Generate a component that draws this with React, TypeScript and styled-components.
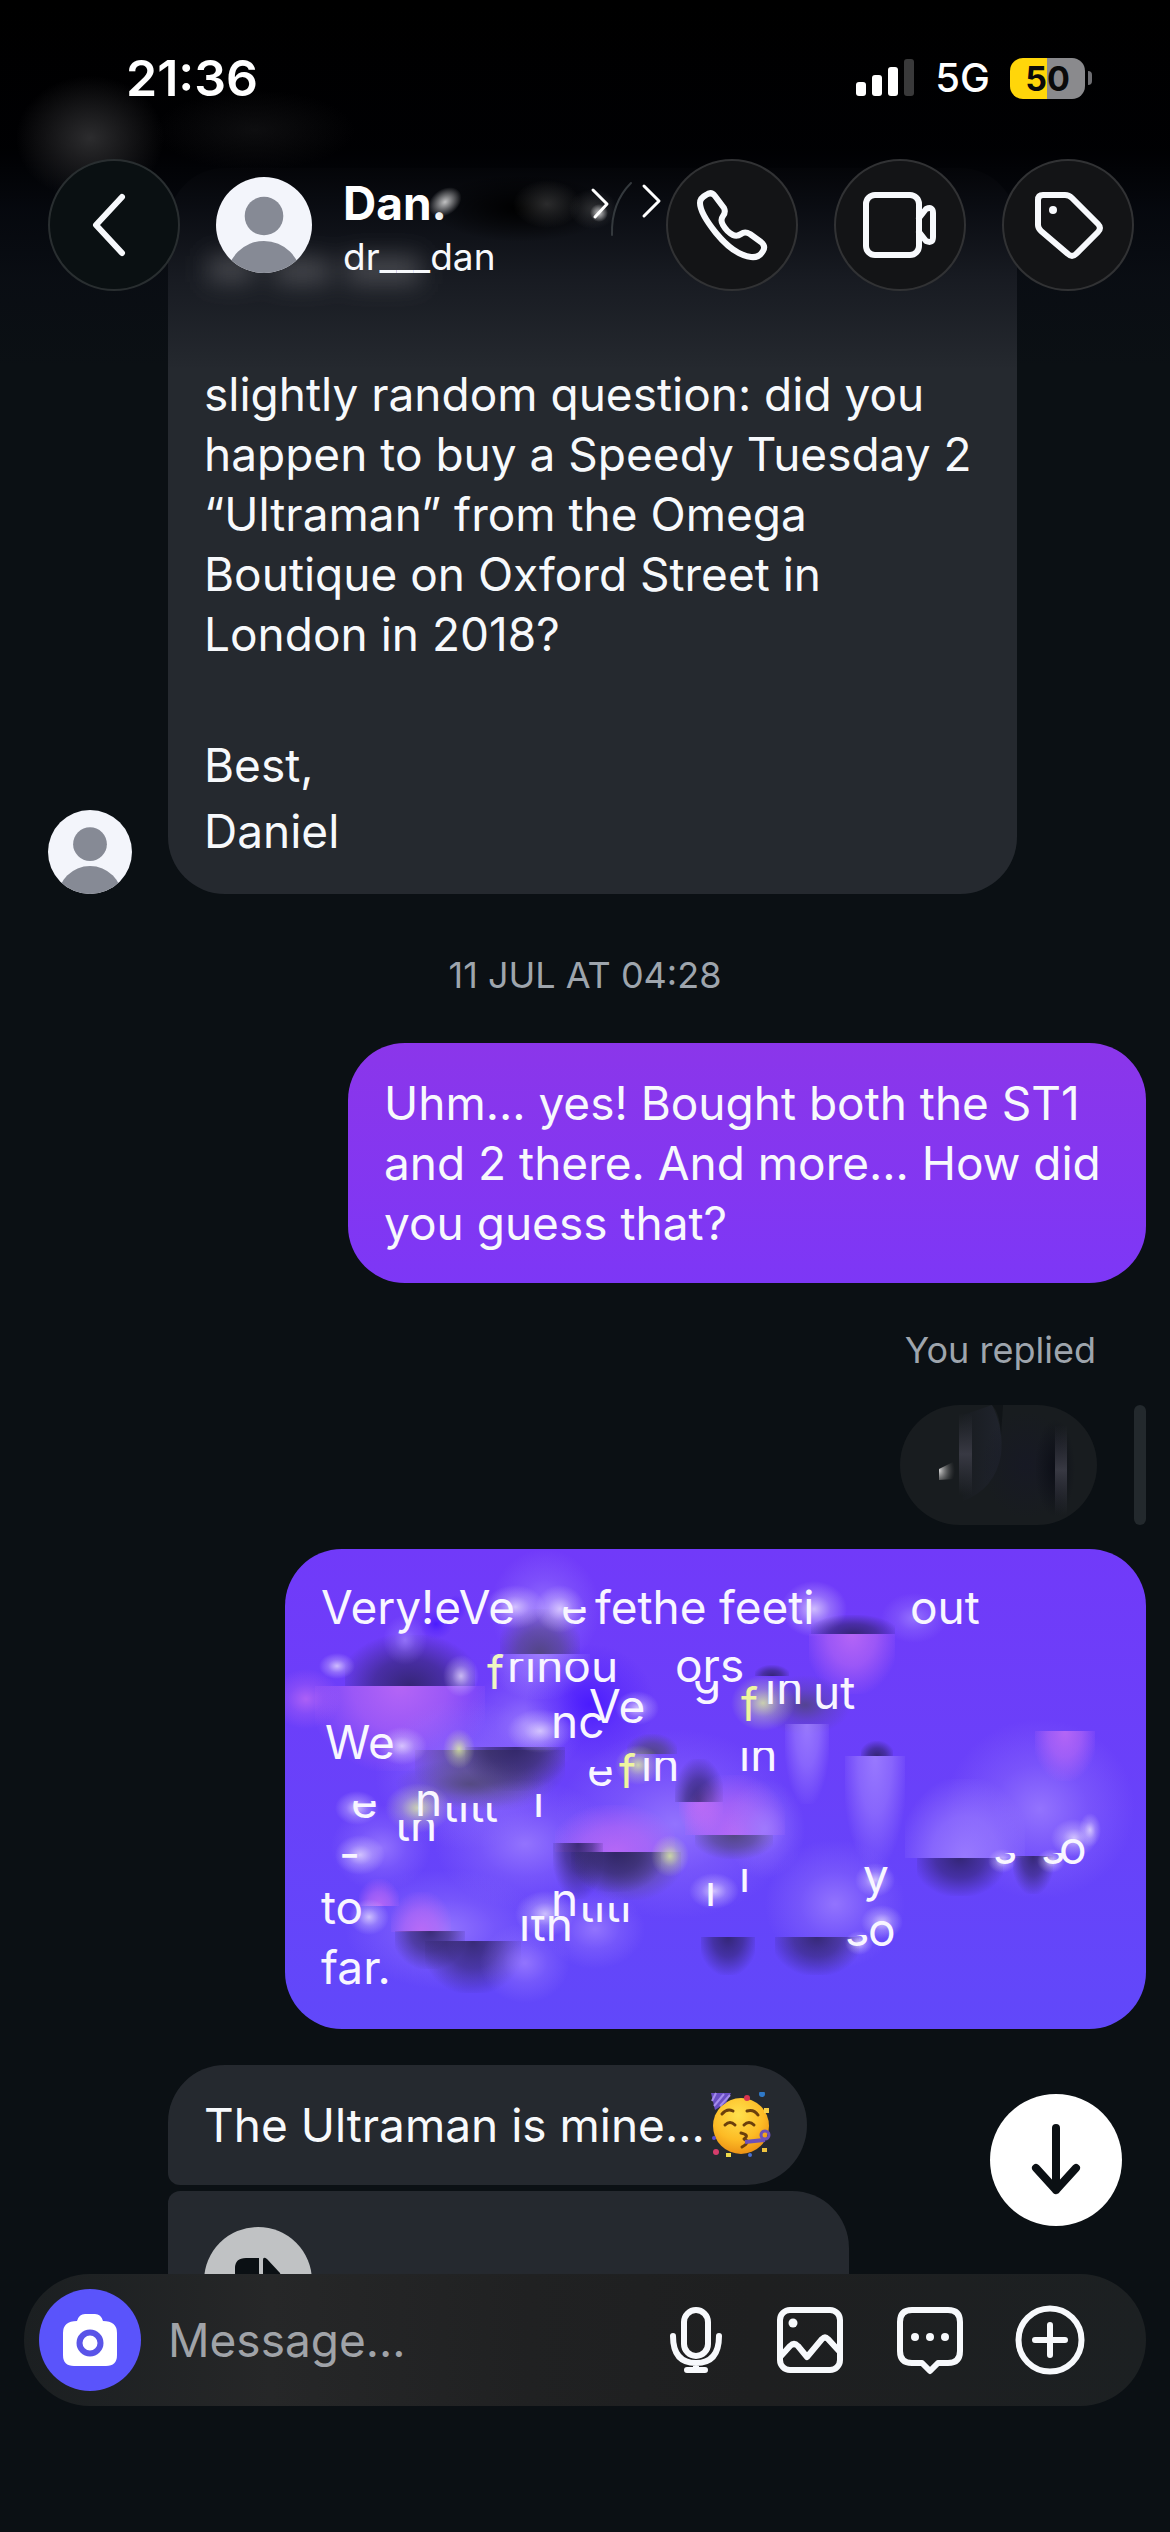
import React from "react";
import styled, { createGlobalStyle, css } from "styled-components";

const GlobalStyle = createGlobalStyle`
  * { box-sizing: border-box; }
  body {
    margin: 0;
    background: #0b1014;
    color: #f7f9fc;
    font-family: Inter, Roboto, "Liberation Sans", sans-serif;
  }
  button, input { font: inherit; color: inherit; border: 0; padding: 0; margin: 0; }
  button { cursor: pointer; }
  p, h1, h2 { margin: 0; font: inherit; }
  svg { display: block; }
`;

const Screen = styled.div`
  position: relative;
  height: 100vh;
  overflow: hidden;
  background: #0b1014;
`;

/* ---------- top overlay ---------- */

const TopOverlay = styled.header`
  position: absolute;
  inset: 0 0 auto 0;
  z-index: 2;
  height: 380px;
  background: linear-gradient(
    180deg,
    #000 0,
    rgba(0, 0, 2, 0.97) 150px,
    rgba(4, 6, 12, 0.8) 210px,
    rgba(8, 10, 18, 0.45) 280px,
    rgba(11, 16, 20, 0) 370px
  );
`;

const Glow = styled.svg`
  position: absolute;
  top: 0;
  left: 0;
`;

const StatusBar = styled.div`
  position: relative;
  display: flex;
  align-items: center;
  justify-content: space-between;
  padding: 48px 78px 0 126px;
  height: 108px;
`;

const Clock = styled.time`
  font-size: 50px;
  line-height: 60px;
  font-weight: 600;
  color: #fff;
`;

const StatusRight = styled.div`
  display: flex;
  align-items: center;
  gap: 20px;
`;

const Network = styled.span`
  font-size: 40px;
  line-height: 48px;
  font-weight: 500;
  color: #fff;
`;

const Battery = styled.div`
  display: flex;
  align-items: center;
  gap: 3px;
`;

const BatteryBody = styled.div`
  width: 75px;
  height: 41px;
  border-radius: 13px;
  background: linear-gradient(90deg, #ffd60a 50%, #8a8a8d 50%);
  color: #0a0a0a;
  font-size: 34px;
  line-height: 41px;
  font-weight: 700;
  text-align: center;
`;

const BatteryTip = styled.div`
  width: 4px;
  height: 14px;
  border-radius: 0 7px 7px 0;
  background: #6e6e72;
`;

const NavRow = styled.div`
  position: relative;
  display: flex;
  align-items: center;
  gap: 36px;
  padding: 0 36px 0 48px;
  margin-top: 51px;
`;

const RoundButton = styled.button<{ $tone: string }>`
  flex: none;
  display: grid;
  place-items: center;
  width: 132px;
  height: 132px;
  border-radius: 50%;
  background: ${(p) => p.$tone};
  border: 2px solid rgba(255, 255, 255, 0.13);
`;

const Identity = styled.a`
  flex: 1;
  min-width: 0;
  display: flex;
  align-items: center;
  gap: 31px;
  color: inherit;
  text-decoration: none;
`;

const Names = styled.div`
  flex: 1;
  min-width: 0;
  padding-top: 6px;
`;

const NameRow = styled.div`
  display: flex;
  align-items: center;
`;

const DisplayName = styled.h1`
  font-size: 46px;
  line-height: 58px;
  font-weight: 700;
  color: #fff;
`;

const Handle = styled.p`
  font-size: 37px;
  line-height: 50px;
`;

/* ---------- conversation ---------- */

const Thread = styled.main`
  display: flex;
  flex-direction: column;
  padding: 168px 24px 0 48px;
`;

const Incoming = styled.div`
  display: flex;
  align-items: flex-end;
  gap: 36px;
`;

const IncomingGroup = styled.div`
  display: flex;
  flex-direction: column;
  align-items: flex-start;
  gap: 6px;
  margin: 36px 0 0 120px;
`;

const bubbleText = css`
  font-size: 46px;
  line-height: 60px;
`;

const Bubble = styled.div<{ $radius?: string; $width?: string }>`
  ${bubbleText}
  width: ${(p) => p.$width ?? "auto"};
  max-width: 100%;
  padding: 30px 36px;
  border-radius: ${(p) => p.$radius ?? "57px"};
  background: #25292f;
`;

const OutBubble = styled(Bubble)<{ $from: string; $to: string }>`
  position: relative;
  align-self: flex-end;
  overflow: hidden;
  background: linear-gradient(180deg, ${(p) => p.$from}, ${(p) => p.$to});
`;

const SignOff = styled.p`
  line-height: 66px;
  padding-top: 68px;
`;

const DateLine = styled.h2`
  margin: 54px 0 41px -24px;
  text-align: center;
  font-size: 36px;
  line-height: 54px;
  color: #9ea5ad;
`;

const ReplyLabel = styled.p`
  align-self: flex-end;
  margin: 43px 50px 31px 0;
  font-size: 36px;
  line-height: 48px;
  color: #9ea5ad;
`;

const ReplyQuote = styled.div`
  align-self: flex-end;
  display: flex;
  gap: 37px;
  margin-bottom: 24px;
`;

const QuotePill = styled.div`
  width: 197px;
  height: 120px;
  border-radius: 60px;
  overflow: hidden;
  background: #181c1f;
`;

const QuoteBar = styled.div`
  width: 12px;
  border-radius: 6px;
  background: #23292d;
`;

const WithEmoji = styled.p`
  display: flex;
  align-items: center;
  gap: 6px;
  height: 60px;
`;

const FileBubble = styled(Bubble)`
  height: 180px;
  padding: 36px;
`;

/* ---------- scrambled message ---------- */

const Scramble = styled.div`
  height: 420px;
`;

const Smears = styled.svg`
  position: absolute;
  top: 0;
  left: 0;
`;

const Fragment = styled.span<{ $x: number; $y: number; $cut?: number; $tint?: string }>`
  position: absolute;
  left: ${(p) => p.$x}px;
  top: ${(p) => p.$y}px;
  white-space: pre;
  color: ${(p) => p.$tint ?? "#f8f6ff"};
  clip-path: inset(${(p) => p.$cut ?? 0}px 0 0 0);
`;

/* ---------- bottom overlay ---------- */

const BottomOverlay = styled.footer`
  position: absolute;
  inset: auto 0 0 0;
  z-index: 2;
  display: flex;
  flex-direction: column;
  gap: 48px;
`;

const JumpButton = styled.button`
  align-self: flex-end;
  margin-right: 48px;
  display: grid;
  place-items: center;
  width: 132px;
  height: 132px;
  border-radius: 50%;
  background: #fff;
`;

const ComposerDock = styled.div`
  padding: 0 24px 126px;
  background: linear-gradient(180deg, rgba(11, 16, 20, 0) 66px, #0b1014 66px);
`;

const Composer = styled.form`
  display: flex;
  align-items: center;
  height: 132px;
  padding: 0 60px 0 15px;
  border-radius: 66px;
  background: linear-gradient(90deg, #1b1f21 0, #262728 22%, #202122 45%, #1e1f20 65%, #1c2022 100%);
`;

const CameraButton = styled.button`
  flex: none;
  display: grid;
  place-items: center;
  width: 102px;
  height: 102px;
  border-radius: 50%;
  background: #5a54fb;
`;

const MessageInput = styled.input`
  flex: 1;
  min-width: 0;
  margin-left: 27px;
  background: transparent;
  outline: none;
  font-size: 46px;
  line-height: 60px;
  &::placeholder { color: #a0a3a8; opacity: 1; }
`;

const Tools = styled.div`
  display: flex;
  gap: 48px;
`;

const ToolButton = styled.button`
  display: grid;
  place-items: center;
  width: 72px;
  height: 72px;
  background: transparent;
`;

/* ---------- drawings ---------- */

const line = {
  fill: "none",
  stroke: "currentColor",
  strokeLinecap: "round" as const,
  strokeLinejoin: "round" as const,
};

const Avatar = ({ size }: { size: number }) => (
  <svg width={size} height={size} viewBox="0 0 96 96" style={{ flex: "none" }} aria-hidden="true">
    <clipPath id={`avatar-${size}`}><circle cx="48" cy="48" r="48" /></clipPath>
    <g clipPath={`url(#avatar-${size})`}>
      <rect width="96" height="96" fill="#f3f5fb" />
      <circle cx="48" cy="39" r="19.3" fill="#868a95" />
      <circle cx="48" cy="101" r="37" fill="#868a95" />
    </g>
  </svg>
);

const NameSmudge = () => (
  <svg width="218" height="58" viewBox="6 0 218 58" style={{ overflow: "visible" }} aria-hidden="true">
    <defs>
      <radialGradient id="name-light"><stop offset="0" stopColor="#fff" stopOpacity=".75" /><stop offset="1" stopColor="#fff" stopOpacity="0" /></radialGradient>
      <radialGradient id="name-grey"><stop offset="0" stopColor="#666" stopOpacity=".4" /><stop offset="1" stopColor="#666" stopOpacity="0" /></radialGradient>
      <radialGradient id="name-black"><stop offset="0" stopColor="#000" /><stop offset="1" stopColor="#000" stopOpacity="0" /></radialGradient>
    </defs>
    <ellipse cx="80" cy="34" rx="90" ry="34" fill="url(#name-black)" />
    <ellipse cx="4" cy="28" rx="18" ry="13" fill="url(#name-light)" transform="rotate(-35 4 28)" />
    <ellipse cx="106" cy="30" rx="34" ry="24" fill="url(#name-grey)" />
    <ellipse cx="152" cy="35" rx="24" ry="20" fill="url(#name-grey)" />
    <circle cx="158" cy="39" r="9" fill="url(#name-light)" />
    <path d="M152 16l14 14-12 13" {...line} stroke="#fff" strokeWidth="3" />
    <path d="M190 9q-20 20-19 52" {...line} stroke="#34393d" strokeWidth="2" />
    <path d="M203 12l15 15-15 15" {...line} stroke="#fff" strokeWidth="3" />
  </svg>
);

const PartyFace = () => (
  <svg width="60" height="66" viewBox="0 0 60 66" role="img" aria-label="🥳">
    <defs>
      <radialGradient id="face" cx=".45" cy=".3" r=".75">
        <stop offset="0" stopColor="#ffe14d" /><stop offset=".6" stopColor="#fdbb25" /><stop offset="1" stopColor="#e98a12" />
      </radialGradient>
    </defs>
    <circle cx="30" cy="34" r="28" fill="url(#face)" />
    <path d="M0 1l20 0-5 10-11 7z" fill="#6a4fc4" />
    <path d="M5 1l-4 8M13 2l-10 12M19 3l-10 11" stroke="#a48cec" strokeWidth="2" fill="none" />
    <g {...line} stroke="#6b3f0c" strokeWidth="3">
      <path d="M11 22q5-6 11-3M36 19q7-2 11 4" />
      <path d="M14 33q5-5 10 0M33 33q5-5 10 0" />
      <path d="M30 41q9 2 3 6 7 3-2 8" />
    </g>
    <path d="M34 50l20-2" stroke="#6d50b8" strokeWidth="4" />
    <circle cx="54" cy="43" r="4" fill="none" stroke="#6d50b8" strokeWidth="3" />
    <circle cx="36" cy="6" r="3" fill="#d8344f" /><circle cx="51" cy="2" r="3" fill="#2f79c8" />
    <rect x="53" y="16" width="5" height="5" fill="#f6cf4a" /><rect x="51" y="56" width="5" height="4" fill="#f0c440" />
    <circle cx="5" cy="60" r="3" fill="#d63d6c" /><rect x="15" y="61" width="5" height="4" fill="#efdc4c" />
    <circle cx="3" cy="46" r="2" fill="#5a4fd0" /><circle cx="39" cy="63" r="2" fill="#486fd0" />
  </svg>
);

type Smear = { k: "down" | "up" | "glow"; c: string; x: number; y: number; w: number; h: number };

const inks: Record<string, string> = {
  dark: "#2b2160",
  grey: "#4c4570",
  pink: "#c16cf5",
  lilac: "#a183ff",
  white: "#efe6ff",
  lime: "#e9ff9a",
  blue: "#3f10ff",
};

const smears: Smear[] = [
  { k: "glow", c: "lilac", x: 205, y: 0, w: 110, h: 120 },
  { k: "up", c: "grey", x: 215, y: 60, w: 80, h: 45 },
  { k: "up", c: "dark", x: 60, y: 86, w: 130, h: 51 },
  { k: "down", c: "pink", x: 30, y: 137, w: 170, h: 85 },
  { k: "glow", c: "pink", x: -14, y: 120, w: 70, h: 60 },
  { k: "down", c: "lilac", x: 205, y: 105, w: 100, h: 45 },
  { k: "glow", c: "lilac", x: 180, y: 120, w: 120, h: 110 },
  { k: "glow", c: "blue", x: 240, y: 95, w: 130, h: 120 },
  { k: "glow", c: "white", x: 200, y: 36, w: 60, h: 44 },
  { k: "glow", c: "white", x: 250, y: 36, w: 50, h: 48 },
  { k: "glow", c: "lilac", x: 98, y: 66, w: 44, h: 50 },
  { k: "glow", c: "blue", x: 134, y: 60, w: 34, h: 30 },
  { k: "glow", c: "blue", x: 160, y: 46, w: 22, h: 26 },
  { k: "glow", c: "white", x: 34, y: 104, w: 36, h: 26 },
  { k: "glow", c: "white", x: 158, y: 106, w: 36, h: 42 },
  { k: "glow", c: "white", x: 496, y: 32, w: 66, h: 56 },
  { k: "glow", c: "lilac", x: 596, y: 44, w: 66, h: 50 },
  { k: "up", c: "dark", x: 526, y: 66, w: 84, h: 19 },
  { k: "down", c: "pink", x: 524, y: 85, w: 86, h: 60 },
  { k: "up", c: "dark", x: 470, y: 116, w: 34, h: 11 },
  { k: "glow", c: "grey", x: 474, y: 126, w: 92, h: 60 },
  { k: "down", c: "lilac", x: 500, y: 175, w: 44, h: 80 },
  { k: "glow", c: "lime", x: 446, y: 126, w: 64, h: 56 },
  { k: "glow", c: "lilac", x: 90, y: 150, w: 180, h: 150 },
  { k: "down", c: "grey", x: 130, y: 201, w: 150, h: 60 },
  { k: "down", c: "dark", x: 180, y: 198, w: 100, h: 44 },
  { k: "glow", c: "grey", x: 110, y: 210, w: 150, h: 50 },
  { k: "glow", c: "lime", x: 158, y: 180, w: 32, h: 40 },
  { k: "glow", c: "white", x: 222, y: 160, w: 66, h: 44 },
  { k: "glow", c: "white", x: 92, y: 178, w: 50, h: 38 },
  { k: "glow", c: "white", x: 330, y: 142, w: 44, h: 34 },
  { k: "glow", c: "lime", x: 100, y: 234, w: 66, h: 50 },
  { k: "glow", c: "white", x: 50, y: 242, w: 44, h: 34 },
  { k: "glow", c: "lilac", x: 46, y: 256, w: 100, h: 86 },
  { k: "glow", c: "white", x: 50, y: 286, w: 50, h: 40 },
  { k: "glow", c: "lilac", x: 150, y: 230, w: 180, h: 130 },
  { k: "glow", c: "lilac", x: 270, y: 180, w: 240, h: 190 },
  { k: "up", c: "grey", x: 342, y: 185, w: 50, h: 20 },
  { k: "glow", c: "lime", x: 330, y: 196, w: 46, h: 40 },
  { k: "up", c: "dark", x: 390, y: 210, w: 48, h: 43 },
  { k: "down", c: "pink", x: 394, y: 253, w: 44, h: 34 },
  { k: "up", c: "pink", x: 270, y: 256, w: 120, h: 47 },
  { k: "down", c: "dark", x: 268, y: 294, w: 50, h: 56 },
  { k: "down", c: "grey", x: 290, y: 303, w: 106, h: 48 },
  { k: "down", c: "dark", x: 286, y: 303, w: 90, h: 40 },
  { k: "glow", c: "lime", x: 366, y: 286, w: 38, h: 42 },
  { k: "up", c: "pink", x: 400, y: 226, w: 100, h: 60 },
  { k: "glow", c: "lilac", x: 440, y: 230, w: 80, h: 100 },
  { k: "down", c: "grey", x: 410, y: 286, w: 78, h: 24 },
  { k: "up", c: "dark", x: 576, y: 192, w: 32, h: 15 },
  { k: "down", c: "lilac", x: 560, y: 207, w: 60, h: 110 },
  { k: "glow", c: "lilac", x: 660, y: 170, w: 190, h: 180 },
  { k: "down", c: "pink", x: 750, y: 182, w: 60, h: 50 },
  { k: "up", c: "lilac", x: 620, y: 230, w: 120, h: 79 },
  { k: "down", c: "dark", x: 632, y: 309, w: 86, h: 38 },
  { k: "down", c: "dark", x: 728, y: 307, w: 40, h: 38 },
  { k: "glow", c: "white", x: 766, y: 270, w: 46, h: 38 },
  { k: "glow", c: "white", x: 794, y: 264, w: 22, h: 34 },
  { k: "glow", c: "white", x: 703, y: 300, w: 28, h: 24 },
  { k: "glow", c: "white", x: 752, y: 300, w: 28, h: 24 },
  { k: "glow", c: "lilac", x: 60, y: 320, w: 200, h: 120 },
  { k: "up", c: "pink", x: 74, y: 330, w: 40, h: 27 },
  { k: "up", c: "pink", x: 106, y: 343, w: 60, h: 40 },
  { k: "down", c: "dark", x: 110, y: 382, w: 70, h: 38 },
  { k: "down", c: "dark", x: 140, y: 392, w: 96, h: 52 },
  { k: "glow", c: "lilac", x: 195, y: 374, w: 90, h: 80 },
  { k: "glow", c: "white", x: 230, y: 342, w: 60, h: 46 },
  { k: "glow", c: "lilac", x: 260, y: 340, w: 100, h: 80 },
  { k: "glow", c: "white", x: 64, y: 350, w: 40, h: 36 },
  { k: "glow", c: "lilac", x: 480, y: 290, w: 140, h: 130 },
  { k: "down", c: "dark", x: 416, y: 388, w: 54, h: 38 },
  { k: "down", c: "dark", x: 490, y: 388, w: 84, h: 38 },
  { k: "glow", c: "white", x: 570, y: 314, w: 40, h: 34 },
  { k: "glow", c: "white", x: 576, y: 356, w: 42, h: 34 },
  { k: "glow", c: "white", x: 560, y: 382, w: 28, h: 24 },
  { k: "glow", c: "white", x: 404, y: 324, w: 50, h: 36 },
];

const SmearArt = () => (
  <Smears width="861" height="480" viewBox="0 0 861 480" aria-hidden="true">
    <defs>
      {Object.entries(inks).flatMap(([name, color]) =>
        (["down", "up", "glow"] as const).map((k) => (
          <radialGradient
            key={name + k}
            id={`${name}-${k}`}
            gradientUnits="objectBoundingBox"
            cx="0"
            cy="0"
            r="1"
            gradientTransform={
              k === "glow" ? "translate(.5 .5) scale(.5)" : `translate(.5 ${k === "down" ? 0 : 1}) scale(.56 1.05)`
            }
          >
            <stop offset="0" stopColor={color} stopOpacity={k === "glow" ? 0.75 : 0.85} />
            <stop offset=".5" stopColor={color} stopOpacity={k === "glow" ? 0.28 : 0.55} />
            <stop offset="1" stopColor={color} stopOpacity="0" />
          </radialGradient>
        ))
      )}
    </defs>
    {smears.map((s, i) => (
      <rect key={i} x={s.x} y={s.y} width={s.w} height={s.h} fill={`url(#${s.c}-${s.k})`} />
    ))}
  </Smears>
);

/* x, top of the 60px line box, text, pixels trimmed from the top, tint */
const fragments: [number, number, string, number?, string?][] = [
  [36, 28, "Very!eVe"],
  [276, 28, "e", 30],
  [310, 28, "fethe"],
  [434, 28, "feeti"],
  [625, 28, "out"],
  [202, 93, "f", 0, "#eef5c4"],
  [222, 86, "rinou", 24],
  [390, 86, "ors"],
  [408, 98, "g", 34],
  [528, 113, "ut"],
  [456, 125, "f", 0, "#eef5a0"],
  [480, 108, "in", 24],
  [304, 127, "Ve"],
  [266, 142, "nc"],
  [40, 163, "We"],
  [302, 190, "e", 28],
  [334, 192, "f", 0, "#eef5a0"],
  [356, 185, "in", 24],
  [454, 175, "ın", 24],
  [66, 222, "e", 30],
  [130, 220, "n"],
  [158, 226, "titt", 28],
  [248, 221, "ı", 24],
  [110, 245, "th", 26],
  [54, 274, "-"],
  [708, 268, "s", 36],
  [756, 268, "s", 36],
  [774, 268, "o", 10],
  [36, 328, "to"],
  [266, 320, "n"],
  [294, 326, "titi", 28],
  [234, 345, "lth", 22],
  [420, 310, "ı", 24],
  [454, 296, "ı", 24],
  [578, 296, "y", 10],
  [560, 350, "s", 36],
  [583, 350, "o", 10],
  [36, 388, "far."],
];

export default function App() {
  return (
    <>
      <GlobalStyle />
      <Screen>
        <TopOverlay>
          <Glow width="520" height="330" viewBox="0 0 520 330" aria-hidden="true">
            <defs>
              <radialGradient id="haze"><stop offset="0" stopColor="#2c2c2e" /><stop offset="1" stopColor="#2c2c2e" stopOpacity="0" /></radialGradient>
              <filter id="soft" x="-20%" y="-150%" width="140%" height="400%"><feGaussianBlur stdDeviation="12" /></filter>
            </defs>
            <ellipse cx="90" cy="138" rx="74" ry="62" fill="url(#haze)" />
            <ellipse cx="255" cy="130" rx="100" ry="40" fill="url(#haze)" opacity=".3" />
            <g fill="#77777b" fillOpacity=".5" filter="url(#soft)">
              <rect x="208" y="256" width="46" height="26" />
              <rect x="274" y="258" width="56" height="26" />
              <rect x="346" y="256" width="74" height="28" />
            </g>
          </Glow>
          <StatusBar>
            <Clock>21:36</Clock>
            <StatusRight>
              <svg width="59" height="38" viewBox="0 0 59 38" role="img" aria-label="Signal strength">
                <rect x="0" y="23" width="10" height="14" rx="3" fill="#fff" />
                <rect x="16" y="16" width="10" height="21" rx="3" fill="#fff" />
                <rect x="32" y="8" width="10" height="29" rx="3" fill="#fff" />
                <rect x="48" y="0" width="10" height="37" rx="3" fill="#39393a" />
              </svg>
              <Network>5G</Network>
              <Battery>
                <BatteryBody>50</BatteryBody>
                <BatteryTip />
              </Battery>
            </StatusRight>
          </StatusBar>
          <NavRow>
            <RoundButton type="button" aria-label="Back" $tone="#0a1012">
              <svg width="60" height="72" viewBox="0 0 60 72"><path d="M38 8L12 36l26 28" {...line} strokeWidth="6" /></svg>
            </RoundButton>
            <Identity href="#profile">
              <Avatar size={96} />
              <Names>
                <NameRow>
                  <DisplayName>Dan.</DisplayName>
                  <NameSmudge />
                </NameRow>
                <Handle>dr___dan</Handle>
              </Names>
            </Identity>
            <RoundButton type="button" aria-label="Call" $tone="#131416">
              <svg width="72" height="72" viewBox="0 0 72 72">
                <path d="M10 6q5-4 9 1l9 12q2 4-1 8-3 4 0 9 4 7 10 10 4 2 8-1 4-3 9 0l11 8q5 4 2 9-4 7-12 6Q38 66 20 44 4 24 4 14q0-5 6-8z" {...line} strokeWidth="6" />
              </svg>
            </RoundButton>
            <RoundButton type="button" aria-label="Video call" $tone="#131416">
              <svg width="76" height="72" viewBox="0 0 76 72">
                <rect x="4" y="6" width="53" height="60" rx="9" {...line} strokeWidth="6" />
                <path d="M57 29l7-9q7-3 7 4v24q0 7-7 4l-7-9" {...line} strokeWidth="6" />
              </svg>
            </RoundButton>
            <RoundButton type="button" aria-label="Label" $tone="#131416">
              <svg width="72" height="72" viewBox="0 0 72 72">
                <path d="M11 6h22q4 0 7 3l26 26q4 4 0 8L44 65q-4 4-8 0L9 42q-3-3-3-6V11q0-5 5-5z" {...line} strokeWidth="6" />
                <circle cx="21" cy="21" r="4" fill="currentColor" />
              </svg>
            </RoundButton>
          </NavRow>
        </TopOverlay>

        <Thread>
          <Incoming>
            <Avatar size={84} />
            <Bubble $width="849px">
              <svg width="240" height="166" aria-hidden="true" />
              <p>
                slightly random question: did you<br />happen to buy a Speedy Tuesday 2<br />“Ultraman” from the Omega<br />
                Boutique on Oxford Street in<br />London in 2018?
              </p>
              <SignOff>Best,<br />Daniel</SignOff>
            </Bubble>
          </Incoming>

          <DateLine>11 JUL AT 04:28</DateLine>

          <OutBubble $width="798px" $from="#8b36ea" $to="#7d37f6">
            Uhm... yes! Bought both the ST1<br />and 2 there. And more... How did<br />you guess that?
          </OutBubble>

          <ReplyLabel>You replied</ReplyLabel>
          <ReplyQuote>
            <QuotePill>
              <svg width="197" height="120" viewBox="0 0 197 120" aria-hidden="true">
                <defs>
                  <linearGradient id="strip" x2="0" y2="1"><stop offset="0" stopColor="#34353f" stopOpacity="0" /><stop offset=".5" stopColor="#383943" /><stop offset="1" stopColor="#34353f" stopOpacity="0" /></linearGradient>
                  <radialGradient id="fleck" cx="0" cy=".5" r="1"><stop offset="0" stopColor="#d5d5d5" /><stop offset="1" stopColor="#555" stopOpacity="0" /></radialGradient>
                  <radialGradient id="pool"><stop offset="0" stopColor="#171924" /><stop offset="1" stopColor="#171924" stopOpacity="0" /></radialGradient>
                  <radialGradient id="shade"><stop offset="0" stopColor="#0c0e17" /><stop offset="1" stopColor="#0c0e17" stopOpacity="0" /></radialGradient>
                  <linearGradient id="lens"><stop offset="0" stopColor="#1e212b" stopOpacity="0" /><stop offset="1" stopColor="#20242d" /></linearGradient>
                </defs>
                <path d="M92 0q12 24 9 50-6 34-38 46-8-40 0-86z" fill="url(#lens)" />
                <path d="M92 0q8 8 9 30l2-30z" fill="#101417" />
                <ellipse cx="126" cy="60" rx="44" ry="54" fill="url(#pool)" />
                <rect x="59" y="8" width="13" height="82" fill="url(#strip)" />
                <rect x="135" y="14" width="40" height="98" fill="url(#shade)" />
                <rect x="155" y="20" width="12" height="90" fill="url(#strip)" />
                <path d="M39 64l16-8v18l-16 1z" fill="url(#fleck)" />
              </svg>
            </QuotePill>
            <QuoteBar />
          </ReplyQuote>

          <OutBubble $width="861px" $from="#713af9" $to="#6148fa">
            <Scramble>
              <SmearArt />
              {fragments.map(([x, y, text, cut, tint], i) => (
                <Fragment key={i} $x={x} $y={y} $cut={cut} $tint={tint}>{text}</Fragment>
              ))}
            </Scramble>
          </OutBubble>

          <IncomingGroup>
            <Bubble $radius="57px 60px 60px 12px">
              <WithEmoji>The Ultraman is mine...<PartyFace /></WithEmoji>
            </Bubble>
            <FileBubble $width="681px" $radius="12px 57px 57px 57px">
              <svg width="108" height="108" viewBox="0 0 108 108" aria-hidden="true">
                <circle cx="54" cy="54" r="54" fill="#c0c2c4" />
                <path d="M42 31h13v15q0 8 8 8h14v16q0 9-9 9H42q-11 0-11-10V41q0-10 11-10z" fill="#0b1014" />
                <path d="M59 33q0-4 4-1l13 14q2 5-2 5H63q-4 0-4-4z" fill="#0b1014" />
              </svg>
            </FileBubble>
          </IncomingGroup>
        </Thread>

        <BottomOverlay>
          <JumpButton type="button" aria-label="Jump to latest">
            <svg width="60" height="72" viewBox="0 0 60 72">
              <path d="M30 4v62M10 44l20 22 20-22" fill="none" stroke="#0b1014" strokeWidth="8" strokeLinecap="round" strokeLinejoin="round" />
            </svg>
          </JumpButton>
          <ComposerDock>
            <Composer onSubmit={(e) => e.preventDefault()}>
              <CameraButton type="button" aria-label="Camera">
                <svg width="56" height="56" viewBox="0 0 56 56">
                  <path d="M15 9q2-7 8-7h10q6 0 8 7 14 0 14 12v22q0 11-11 11H12Q1 54 1 43V21Q1 9 15 9z" fill="#fff" />
                  <circle cx="28" cy="31" r="10.5" fill="#fff" stroke="#5a54e8" strokeWidth="6" />
                </svg>
              </CameraButton>
              <MessageInput type="text" aria-label="Message" placeholder="Message..." />
              <Tools>
                <ToolButton type="button" aria-label="Voice message">
                  <svg width="72" height="72" viewBox="0 0 72 72">
                    <rect x="30" y="6" width="24" height="46" rx="12" {...line} strokeWidth="6" />
                    <path d="M19 32q0 27 23 27t23-27M42 60v6M33 66h18" {...line} strokeWidth="6" />
                  </svg>
                </ToolButton>
                <ToolButton type="button" aria-label="Photo">
                  <svg width="72" height="72" viewBox="0 0 72 72">
                    <rect x="6" y="6" width="60" height="60" rx="10" {...line} strokeWidth="6" />
                    <circle cx="19" cy="19" r="4.5" fill="currentColor" />
                    <path d="M7 52l9-10q4-4 8 0l9 11 15-18q3-3 6 0l11 12" {...line} strokeWidth="6" />
                  </svg>
                </ToolButton>
                <ToolButton type="button" aria-label="Quick replies">
                  <svg width="72" height="72" viewBox="0 0 72 72">
                    <path d="M18 6h36q12 0 12 12v29q0 12-12 12H44l-8 8-8-8H18Q6 59 6 47V18Q6 6 18 6z" {...line} strokeWidth="6" />
                    <circle cx="21" cy="33" r="4" fill="currentColor" /><circle cx="36" cy="33" r="4" fill="currentColor" /><circle cx="51" cy="33" r="4" fill="currentColor" />
                  </svg>
                </ToolButton>
                <ToolButton type="button" aria-label="More">
                  <svg width="72" height="72" viewBox="0 0 72 72">
                    <circle cx="36" cy="36" r="31.5" {...line} strokeWidth="6" />
                    <path d="M36 21v30M21 36h30" {...line} strokeWidth="6" />
                  </svg>
                </ToolButton>
              </Tools>
            </Composer>
          </ComposerDock>
        </BottomOverlay>
      </Screen>
    </>
  );
}
